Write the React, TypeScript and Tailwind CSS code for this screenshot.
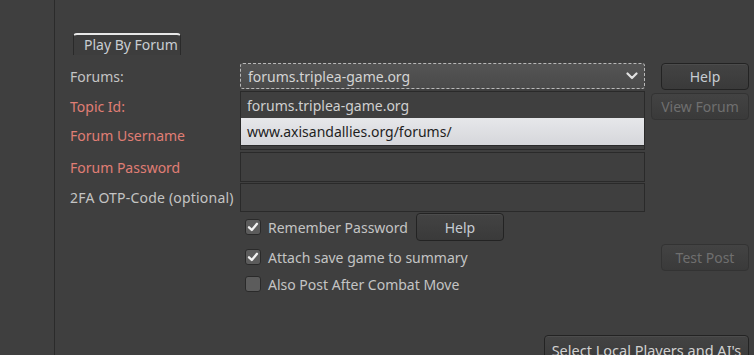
import { useState } from "react";

type CheckProps = { checked: boolean; label: string; onToggle: () => void };

function Check({ checked, label, onToggle }: CheckProps) {
  return (
    <label className="flex items-center gap-[7px] cursor-default" onClick={onToggle}>
      <span className="w-[16px] h-[16px] rounded-[3px] border border-[#2a2a2a] bg-[#5c5c5c] flex items-center justify-center">
        {checked && (
          <svg width="12" height="12" viewBox="0 0 12 12">
            <path d="M2 6.3 L4.8 9 L10 2.8" fill="none" stroke="#f2f2f2" strokeWidth="2.3" strokeLinecap="round" strokeLinejoin="round" />
          </svg>
        )}
      </span>
      <span>{label}</span>
    </label>
  );
}

function Btn({ children, disabled, className }: { children: React.ReactNode; disabled?: boolean; className?: string }) {
  return (
    <button
      className={
        "h-[27px] rounded-[4px] border bg-gradient-to-b from-[#434343] to-[#3a3a3a] " +
        (disabled ? "border-[#333333] text-[#6f6f6f] " : "border-[#232323] text-[#c6ccd3] shadow-[inset_0_1px_0_#4c4c4c] ") +
        (className ?? "")
      }
    >
      {children}
    </button>
  );
}

function App() {
  const [remember, setRemember] = useState(true);
  const [attach, setAttach] = useState(true);
  const [alsoPost, setAlsoPost] = useState(false);

  return (
    <div className="w-[754px] h-[355px] overflow-hidden bg-[#3f3f3f] text-[#c4c4c4] text-[14px] flex" style={{ fontFamily: '"Noto Sans", "Open Sans", sans-serif' }}>
      {/* left strip */}
      <div className="w-[55px] shrink-0 border-r border-[#2b2b2b]" />

      <div className="flex-1 pt-[33px] pl-[14px] flex flex-col">
        {/* tab header */}
        <div className="pl-[4px] h-[22px] flex">
          <div className="w-[108px] h-[22px] rounded-t-[4px] border-t-2 border-[#e8e8e8] border-x border-x-[#2a2a2a] bg-[#3d3d3d] pl-[10px] leading-[20px] text-[#c9cdd2]">
            Play By Forum
          </div>
        </div>
        <div className="mt-[3px] h-px bg-[#2a2a2a]" />

        {/* form */}
        <div className="mt-[5px] pr-[5px] relative flex flex-col">
          {/* Forums */}
          <div className="flex items-center h-[26px]">
            <div className="w-[171px] pl-px">Forums:</div>
            <div className="w-[405px] h-[26px] rounded-[3px] border border-dashed border-[#b9b9b9] bg-gradient-to-b from-[#545454] to-[#4a4a4a] flex items-center justify-between pl-[7px] pr-[6px] text-[#d4d4d4]">
              <span>forums.triplea-game.org</span>
              <svg width="12" height="8" viewBox="0 0 12 8">
                <path d="M1.5 1.5 L6 6 L10.5 1.5" fill="none" stroke="#e0e0e0" strokeWidth="2.2" strokeLinecap="round" strokeLinejoin="round" />
              </svg>
            </div>
            <div className="flex-1 flex justify-end">
              <Btn className="w-[88px]">Help</Btn>
            </div>
          </div>

          {/* Topic Id */}
          <div className="flex items-center h-[28px] mt-[3px]">
            <div className="w-[171px] pl-px text-[#e07e75]">Topic Id:</div>
            <div className="w-[405px] h-[28px] border border-[#2a2a2a]" />
            <div className="flex-1 flex justify-end">
              <Btn disabled className="w-[98px]">View Forum</Btn>
            </div>
          </div>

          {/* Username */}
          <div className="flex items-center h-[29px] mt-[1px]">
            <div className="w-[171px] pl-px text-[#e07e75]">Forum Username</div>
            <div className="w-[405px] h-[29px] border border-[#2a2a2a]" />
          </div>

          {/* Password */}
          <div className="flex items-center h-[30px] mt-[2px]">
            <div className="w-[171px] pl-px text-[#e07e75]">Forum Password</div>
            <div className="w-[405px] h-[30px] border border-[#2a2a2a]" />
          </div>

          {/* OTP */}
          <div className="flex items-center h-[29px] mt-[1px]">
            <div className="w-[171px] pl-px tracking-[0.2px]">2FA OTP-Code (optional)</div>
            <div className="w-[405px] h-[29px] border border-[#2a2a2a]" />
          </div>

          {/* Remember */}
          <div className="flex items-center h-[28px] mt-px pl-[176px]">
            <Check checked={remember} label="Remember Password" onToggle={() => setRemember(!remember)} />
            <Btn className="w-[88px] ml-[8px] h-[28px]">Help</Btn>
          </div>

          {/* Attach */}
          <div className="flex items-center h-[28px] mt-[2px] pl-[176px]">
            <Check checked={attach} label="Attach save game to summary" onToggle={() => setAttach(!attach)} />
            <div className="flex-1 flex justify-end">
              <Btn disabled className="w-[88px]">Test Post</Btn>
            </div>
          </div>

          {/* Also post */}
          <div className="flex items-center h-[26px] pl-[176px]">
            <Check checked={alsoPost} label="Also Post After Combat Move" onToggle={() => setAlsoPost(!alsoPost)} />
          </div>

          {/* bottom */}
          <div className="flex justify-end mt-[38px]">
            <Btn className="w-[205px] h-[30px] pt-px text-[14.5px] text-[#d2d2d2]">Select Local Players and AI's</Btn>
          </div>

          {/* open dropdown list */}
          <div className="absolute left-[171px] top-[28px] w-[405px] h-[55px] border border-[#2a2a2a] bg-[#3f3f3f] flex flex-col">
            <div className="h-[26px] pl-[6px] flex items-center text-[#cfcfcf]">forums.triplea-game.org</div>
            <div className="h-[27px] pl-[6px] flex items-center bg-gradient-to-b from-[#e6e7ea] to-[#d6d7db] text-[#1e1e1e]">
              www.axisandallies.org/forums/
            </div>
          </div>
        </div>
      </div>
    </div>
  );
}

export default App;
